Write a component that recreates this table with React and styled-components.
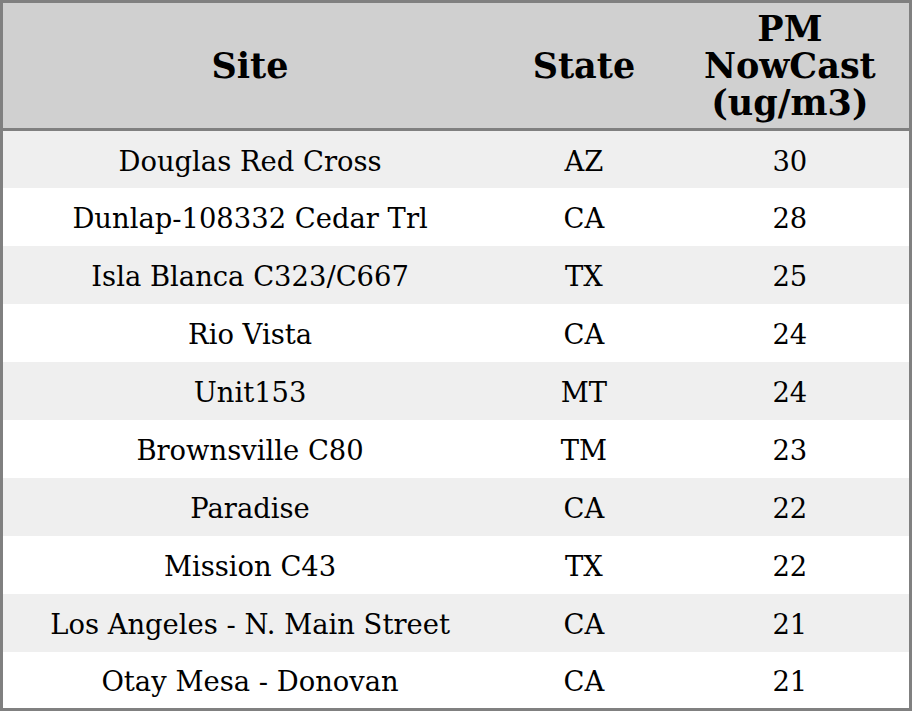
import React from "react";
import styled, { createGlobalStyle } from "styled-components";

const GlobalStyle = createGlobalStyle`
  html, body {
    margin: 0;
    padding: 0;
    background: #ffffff;
  }
`;

const Table = styled.table`
  width: 912px;
  border-collapse: collapse;
  table-layout: fixed;
  border: 3px solid #808080;
  font-family: "DejaVu Serif", serif;
  color: #000;
`;

const HeadCell = styled.th`
  background: #d0d0d0;
  font-size: 35px;
  font-weight: bold;
  line-height: 37px;
  height: 125px;
  padding: 0 4px;
  text-align: center;
  vertical-align: middle;
  border-bottom: 3px solid #808080;
`;

const Row = styled.tr`
  background: ${({ $striped }) => ($striped ? "#efefef" : "#ffffff")};
`;

const Cell = styled.td`
  font-size: 27.4px;
  height: 58px;
  padding: 4px 4px 0;
  text-align: center;
  vertical-align: middle;
  box-sizing: border-box;
`;

const rows = [
  ["Douglas Red Cross", "AZ", 30],
  ["Dunlap-108332 Cedar Trl", "CA", 28],
  ["Isla Blanca C323/C667", "TX", 25],
  ["Rio Vista", "CA", 24],
  ["Unit153", "MT", 24],
  ["Brownsville C80", "TM", 23],
  ["Paradise", "CA", 22],
  ["Mission C43", "TX", 22],
  ["Los Angeles - N. Main Street", "CA", 21],
  ["Otay Mesa - Donovan", "CA", 21],
];

export default function App() {
  return (
    <>
      <GlobalStyle />
      <Table>
        <colgroup>
          <col style={{ width: 494 }} />
          <col style={{ width: 173 }} />
          <col style={{ width: 239 }} />
        </colgroup>
        <thead>
          <tr>
            <HeadCell>Site</HeadCell>
            <HeadCell>State</HeadCell>
            <HeadCell>
              PM
              <br />
              NowCast
              <br />
              (ug/m3)
            </HeadCell>
          </tr>
        </thead>
        <tbody>
          {rows.map(([site, state, value], i) => (
            <Row key={site} $striped={i % 2 === 0}>
              <Cell>{site}</Cell>
              <Cell>{state}</Cell>
              <Cell>{value}</Cell>
            </Row>
          ))}
        </tbody>
      </Table>
    </>
  );
}
